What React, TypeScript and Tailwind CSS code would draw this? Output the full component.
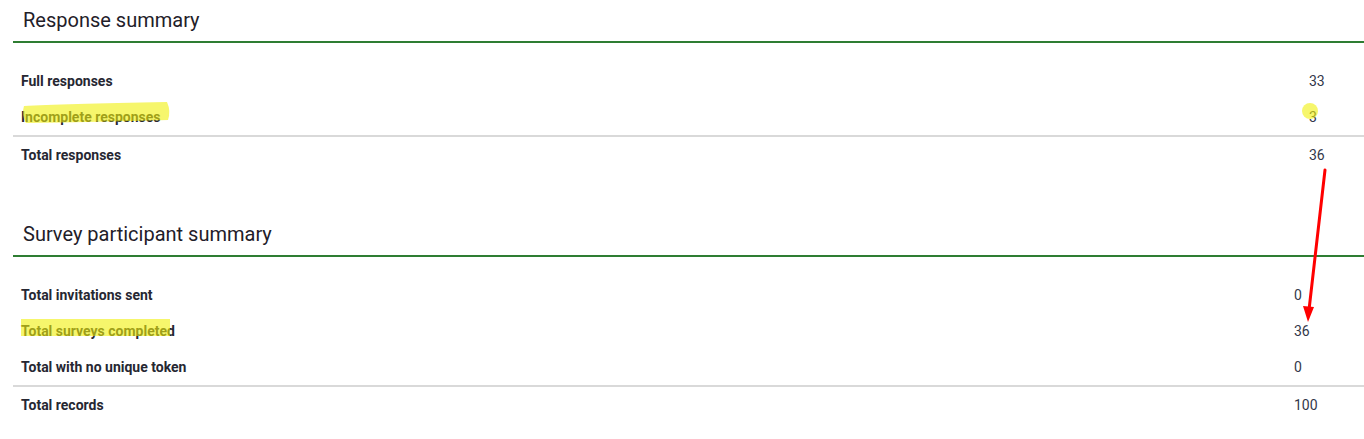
import React from "react";

type Row = { label: string; value: string; total?: boolean };

const responseRows: Row[] = [
  { label: "Full responses", value: "33" },
  { label: "Incomplete responses", value: "3" },
  { label: "Total responses", value: "36", total: true },
];

const participantRows: Row[] = [
  { label: "Total invitations sent", value: "0" },
  { label: "Total surveys completed", value: "36" },
  { label: "Total with no unique token", value: "0" },
  { label: "Total records", value: "100", total: true },
];

const SummaryTable = ({
  title,
  rows,
  valueWidth,
  className = "",
}: {
  title: string;
  rows: Row[];
  valueWidth: string;
  className?: string;
}) => (
  <section className={className}>
    <h3 className="pl-[10px] pt-[6px] pb-[7px] text-[20px] leading-[28px] font-normal text-[#1f2029] border-b-2 border-[#2e7d32]">
      {title}
    </h3>
    <div className="mt-[20px]">
      {rows.map((row) => (
        <div
          key={row.label}
          className={`flex items-center ${
            row.total ? "h-[38px] border-t-2 border-[#d9d9d9]" : "h-[36px]"
          }`}
        >
          <div className="flex-1 pl-[8px] text-[14px] font-bold text-[#262732]">
            {row.label}
          </div>
          <div className={`${valueWidth} text-[14px] text-[#33374a]`}>
            {row.value}
          </div>
        </div>
      ))}
    </div>
  </section>
);

export default function App() {
  return (
    <div className="relative min-h-[439px] bg-white pl-[13px] font-['Roboto','Liberation_Sans',sans-serif] overflow-hidden">
      <SummaryTable
        title="Response summary"
        rows={responseRows}
        valueWidth="w-[55px]"
      />
      <SummaryTable
        title="Survey participant summary"
        rows={participantRows}
        valueWidth="w-[70px]"
        className="mt-[41px]"
      />

      {/* highlighter marks + arrow drawn over the page */}
      <svg
        className="absolute inset-0 pointer-events-none"
        width="1364"
        height="439"
        viewBox="0 0 1364 439"
      >
        <g fill="rgba(240,240,10,0.6)">
          <path d="M24 106 Q60 104 167 102 Q171 111 168 120 Q100 122 26 123 Q21 115 24 106 Z" />
          <circle cx="1310" cy="111" r="8" />
          <rect x="21" y="319" width="149" height="17" />
        </g>
        <line
          x1="1325"
          y1="170"
          x2="1309"
          y2="310"
          stroke="#ff0000"
          strokeWidth="3"
          strokeLinecap="round"
        />
        <polygon points="1303,306 1314,307 1308,322" fill="#ff0000" />
      </svg>
    </div>
  );
}
